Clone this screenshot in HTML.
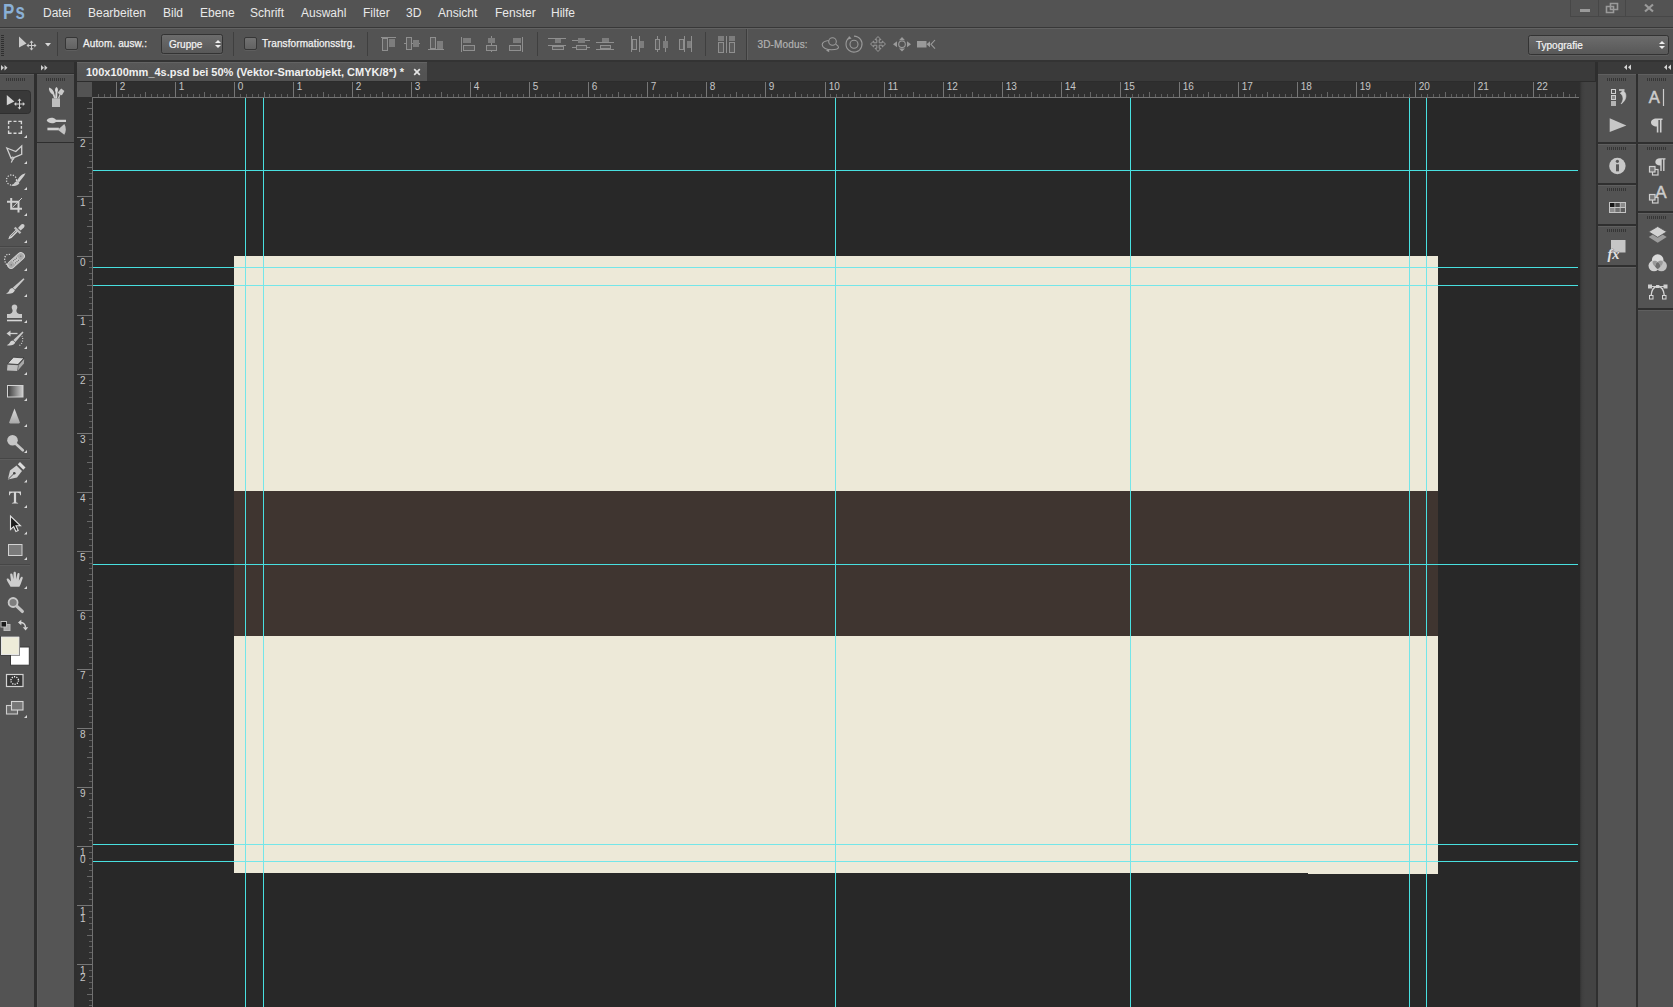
<!DOCTYPE html>
<html><head><meta charset="utf-8"><title>Photoshop</title>
<style>
html,body{margin:0;padding:0}
body{width:1673px;height:1007px;overflow:hidden;background:#535353;font-family:"Liberation Sans",sans-serif;position:relative;color:#e6e6e6}
.abs{position:absolute}
.menu span{position:absolute;top:6px;font-size:12px;color:#e9e9e9;white-space:nowrap}
.sep{position:absolute;width:1px;background:#3f3f3f}
.grip{position:absolute;height:3px;background:repeating-linear-gradient(90deg,#353535 0,#353535 1px,transparent 1px,transparent 2px)}
.tri{position:absolute;width:0;height:0;border-left:3px solid transparent;border-bottom:3px solid #d6d6d6}
.hg{position:absolute;left:93px;width:1485px;height:1px;background:#48e0e0}
.vg{position:absolute;top:98px;height:909px;width:1px;background:#48e0e0}
.pn{position:absolute;background:#535353;box-shadow:inset 0 1px 0 #5f5f5f}

.cb{position:absolute;width:13px;height:13px;box-sizing:border-box;border:1px solid #363636;border-radius:2px;background:linear-gradient(#727272,#626262);box-shadow:0 1px 0 #5e5e5e}
.otxt{position:absolute;font-size:10px;color:#f2f2f2;white-space:nowrap;letter-spacing:0.1px;-webkit-text-stroke:0.25px #f2f2f2}
.dd{position:absolute;box-sizing:border-box;border:1px solid #333;border-radius:2.500px;background:linear-gradient(#6c6c6c,#585858);box-shadow:0 1px 0 #5f5f5f}
.dd span{position:absolute;font-size:10px;color:#f4f4f4;white-space:nowrap;-webkit-text-stroke:0.2px #f4f4f4}
.dd i{position:absolute;top:5px;width:0;height:0;border-left:3px solid transparent;border-right:3px solid transparent;border-bottom:3px solid #eee}
.dd i:after{content:"";position:absolute;left:-3px;top:5px;width:0;height:0;border-left:3px solid transparent;border-right:3px solid transparent;border-top:3px solid #eee}
</style></head><body>

<!-- ===== MENU BAR ===== -->
<div class="abs" style="left:0;top:0;width:1673px;height:27px;background:#535353"></div>
<div class="abs" style="left:3px;top:-1px;font-size:22px;font-weight:bold;color:#8ab0d6;letter-spacing:1.5px;transform:scaleX(0.77);transform-origin:left">Ps</div>
<div class="menu">
<span style="left:43px">Datei</span><span style="left:88px">Bearbeiten</span><span style="left:163px">Bild</span><span style="left:200px">Ebene</span><span style="left:250px">Schrift</span><span style="left:301px">Auswahl</span><span style="left:363px">Filter</span><span style="left:406px">3D</span><span style="left:438px">Ansicht</span><span style="left:495px">Fenster</span><span style="left:551px">Hilfe</span>
</div>
<!-- window controls -->
<div class="abs" style="left:1570px;top:0;width:103px;height:17px;border-left:1px solid #474747;border-bottom:1px solid #474747;box-sizing:border-box"></div>
<div class="sep" style="left:1598px;top:0;height:16px;background:#474747"></div>
<div class="sep" style="left:1625px;top:0;height:16px;background:#474747"></div>
<div class="abs" style="left:1580px;top:9px;width:10px;height:3px;background:#9a9a9a"></div>
<svg class="abs" style="left:1604px;top:1px" width="16" height="14" viewBox="0 0 16 14"><path d="M6.5 2.5h7v6h-7z M2.5 5.5h7v6h-7z" fill="none" stroke="#9a9a9a" stroke-width="1.6"/></svg>
<svg class="abs" style="left:1642px;top:2px" width="14" height="12" viewBox="0 0 14 12"><path d="M3 2.5L11 9.5M11 2.5L3 9.5" fill="none" stroke="#9a9a9a" stroke-width="2.2"/></svg>

<div class="abs" style="left:0;top:27px;width:1673px;height:1px;background:#383838"></div>
<div class="abs" style="left:0;top:28px;width:1673px;height:1px;background:#626262"></div>

<!-- ===== OPTIONS BAR ===== -->

<!-- grip -->
<div class="abs" style="left:1px;top:35px;width:3px;height:21px;background:repeating-linear-gradient(180deg,#2f2f2f 0,#2f2f2f 1px,transparent 1px,transparent 2px)"></div>
<!-- move tool icon -->
<svg class="abs" style="left:18px;top:35px" width="20" height="18" viewBox="0 0 20 18"><path d="M1 1.500V12.500L8.500 8.500Z" fill="#cbcbcb"/><path d="M13.500 7v7M10 10.500h7" stroke="#cbcbcb" stroke-width="1" fill="none"/><path d="M13.500 5.500l2 2.200h-4zM13.500 15.500l2-2.200h-4zM8.500 10.500l2.200-2v4zM18.500 10.500l-2.200-2v4z" fill="#cbcbcb"/></svg>
<svg class="abs" style="left:45px;top:43px" width="6" height="4" viewBox="0 0 6 4"><path d="M0 0h6L3 3.500z" fill="#d8d8d8"/></svg>
<div class="sep" style="left:57px;top:32px;height:24px"></div>
<div class="cb" style="left:65px;top:37px"></div>
<div class="otxt" style="left:83px;top:37.500px">Autom. ausw.:</div>
<div class="dd" style="left:161px;top:34px;width:62px;height:20px"><span style="left:7px;top:3.500px">Gruppe</span><i style="left:53px"></i></div>
<div class="sep" style="left:233px;top:32px;height:24px"></div>
<div class="cb" style="left:244px;top:37px"></div>
<div class="otxt" style="left:262px;top:37.500px">Transformationsstrg.</div>
<div class="sep" style="left:367px;top:32px;height:24px"></div>
<svg class="abs" style="left:370px;top:30px" width="380" height="30" viewBox="370 30 380 30" shape-rendering="crispEdges"><path d="M381 37.5H396" stroke="#8f8f8f" stroke-width="1"/><rect x="382.5" y="38.5" width="5" height="12" fill="#5d5d5d" stroke="#8f8f8f" stroke-width="1"/><rect x="389" y="39" width="6" height="8" fill="#7d7d7d"/><path d="M404 43.5H420" stroke="#8f8f8f" stroke-width="1"/><rect x="406.5" y="37.5" width="5" height="12" fill="#5d5d5d" stroke="#8f8f8f" stroke-width="1"/><rect x="413" y="40" width="6" height="7" fill="#7d7d7d"/><path d="M428 49.5H444" stroke="#8f8f8f" stroke-width="1"/><rect x="430.5" y="37.5" width="5" height="11" fill="#5d5d5d" stroke="#8f8f8f" stroke-width="1"/><rect x="437" y="41" width="6" height="8" fill="#7d7d7d"/><path d="M461.5 37V52" stroke="#8f8f8f" stroke-width="1"/><rect x="463" y="38" width="8" height="5" fill="#7d7d7d"/><rect x="463.5" y="45.5" width="11" height="5" fill="#5d5d5d" stroke="#8f8f8f" stroke-width="1"/><path d="M491.5 36V52" stroke="#8f8f8f" stroke-width="1"/><rect x="488" y="38" width="7" height="5" fill="#7d7d7d"/><rect x="486.5" y="45.5" width="10" height="5" fill="#5d5d5d" stroke="#8f8f8f" stroke-width="1"/><path d="M522.5 37V52" stroke="#8f8f8f" stroke-width="1"/><rect x="513" y="38" width="8" height="5" fill="#7d7d7d"/><rect x="509.5" y="45.5" width="11" height="5" fill="#5d5d5d" stroke="#8f8f8f" stroke-width="1"/><path d="M548 38.5H566" stroke="#8f8f8f" stroke-width="1"/><path d="M548 45.5H566" stroke="#8f8f8f" stroke-width="1"/><rect x="555" y="39" width="6" height="4" fill="#7d7d7d"/><rect x="552.5" y="46.5" width="11" height="3" fill="#5d5d5d" stroke="#8f8f8f" stroke-width="1"/><path d="M572 40.5H590" stroke="#8f8f8f" stroke-width="1"/><path d="M572 47.5H590" stroke="#8f8f8f" stroke-width="1"/><rect x="578" y="38" width="7" height="5" fill="#7d7d7d"/><rect x="576.5" y="45.5" width="10" height="4" fill="#5d5d5d" stroke="#8f8f8f" stroke-width="1"/><path d="M596 42.5H614" stroke="#8f8f8f" stroke-width="1"/><path d="M596 49.5H614" stroke="#8f8f8f" stroke-width="1"/><rect x="602" y="38" width="7" height="4" fill="#7d7d7d"/><rect x="600.5" y="45.5" width="10" height="3" fill="#5d5d5d" stroke="#8f8f8f" stroke-width="1"/><path d="M631.5 36V52" stroke="#8f8f8f" stroke-width="1"/><path d="M639.5 36V52" stroke="#8f8f8f" stroke-width="1"/><rect x="632.5" y="39.5" width="4" height="10" fill="#5d5d5d" stroke="#8f8f8f" stroke-width="1"/><rect x="640" y="41" width="4" height="7" fill="#7d7d7d"/><path d="M657.5 36V52" stroke="#8f8f8f" stroke-width="1"/><path d="M665.5 36V52" stroke="#8f8f8f" stroke-width="1"/><rect x="655.5" y="39.5" width="4" height="10" fill="#5d5d5d" stroke="#8f8f8f" stroke-width="1"/><rect x="663" y="41" width="5" height="7" fill="#7d7d7d"/><path d="M684.5 36V52" stroke="#8f8f8f" stroke-width="1"/><path d="M691.5 36V52" stroke="#8f8f8f" stroke-width="1"/><rect x="679.5" y="39.5" width="4" height="10" fill="#5d5d5d" stroke="#8f8f8f" stroke-width="1"/><rect x="687" y="41" width="4" height="7" fill="#7d7d7d"/><rect x="718" y="36" width="6" height="5" fill="#7d7d7d"/><rect x="718.5" y="42.5" width="5" height="10" fill="#5d5d5d" stroke="#8f8f8f" stroke-width="1"/><path d="M726.5 36V53" stroke="#8f8f8f" stroke-width="1"/><rect x="729" y="36" width="6" height="5" fill="#7d7d7d"/><rect x="729.5" y="42.5" width="5" height="10" fill="#5d5d5d" stroke="#8f8f8f" stroke-width="1"/></svg>
<div class="sep" style="left:537px;top:32px;height:24px"></div>
<div class="sep" style="left:705px;top:32px;height:24px"></div>
<div class="abs" style="left:746px;top:29px;width:1px;height:31px;background:#3d3d3d"></div>
<div class="abs" style="left:747px;top:29px;width:1px;height:31px;background:#606060"></div>
<div class="abs" style="left:757.500px;top:38.500px;font-size:10px;color:#b2b2b2;white-space:nowrap;letter-spacing:0.15px;-webkit-text-stroke:0.2px #b2b2b2">3D-Modus:</div>
<svg class="abs" style="left:815px;top:32px" width="130" height="26" viewBox="815 32 130 26" fill="none" stroke="#9a9a9a" stroke-width="1.100">
<!-- orbit -->
<circle cx="832.500" cy="41.500" r="3.800"/>
<path d="M828.500 40.500c-3.500.5-6.300 2-6.300 4.300 0 3 4.700 5 9.300 5 3.600 0 7-.9 7-2.500 0-1.100-1-2.100-2.800-3"/>
<path d="M826 50.500l3.200-1.800v3.600z" fill="#9a9a9a" stroke="none"/>
<!-- roll -->
<path d="M849.500 37.500a8 8 0 1 0 4.500-1.400"/>
<path d="M848 39.500l1-3.500 2.600 2.600z" fill="#9a9a9a" stroke="none"/>
<circle cx="854" cy="44.300" r="4"/>
<!-- pan -->
<path d="M878 36.500l3 3.200h-1.800v3.100h3.100v-1.800l3.200 3-3.200 3v-1.800h-3.100v3.100h1.800l-3 3.200-3-3.200h1.800v-3.100h-3.100v1.800l-3.200-3 3.200-3v1.800h3.100v-3.100h-1.800z" stroke-width="1"/>
<!-- slide -->
<circle cx="902" cy="44.300" r="3.300"/>
<path d="M902 37l3 3.200h-6zM902 51.600l3-3.200h-6zM893 44.300l4-3v6zM911 44.300l-4-3v6z" fill="#9a9a9a" stroke="none"/>
<!-- camera -->
<rect x="917" y="41" width="9.500" height="6.500" fill="#9a9a9a" stroke="none"/>
<path d="M926.500 44.300l3.500-3v6z" fill="#9a9a9a" stroke="none"/>
<path d="M935 40l-4 4.300 4 4.300"/>
</svg>
<div class="dd" style="left:1528px;top:35px;width:141px;height:20px"><span style="left:7px;top:3.500px">Typografie</span><i style="left:130px"></i></div>

<div class="abs" style="left:0;top:60px;width:1673px;height:2px;background:#333"></div>

<!-- ===== LEFT DOCK ===== -->
<div class="abs" style="left:0;top:62px;width:77px;height:945px;background:#2e2e2e"></div>
<div class="abs" style="left:0;top:62px;width:74.300px;height:11px;background:#3a3a3a"></div>
<div class="pn" style="left:0;top:74px;width:34.400px;height:933px"></div>
<div class="pn" style="left:36.700px;top:74px;width:37.600px;height:68px"></div>
<div class="pn" style="left:36.700px;top:143px;width:37.600px;height:864px;background:#555;box-shadow:inset 1px 0 0 #5b5b5b"></div>

<!-- header arrows -->
<svg class="abs" style="left:0;top:62px" width="76" height="12" viewBox="0 62 76 12"><path d="M1 65l3 2.700-3 2.700zM4.500 65l3 2.700-3 2.700zM41 65l3 2.700-3 2.700zM44.500 65l3 2.700-3 2.700z" fill="#cfcfcf"/></svg>
<div class="grip" style="left:6px;top:78px;width:20px"></div>
<div class="grip" style="left:46px;top:78px;width:20px"></div>
<svg class="abs" style="left:0;top:74px" width="36" height="660" viewBox="0 74 36 660">
<defs>
<linearGradient id="gr1" x1="0" x2="1" y1="0" y2="0"><stop offset="0" stop-color="#3a3a3a"/><stop offset="1" stop-color="#d0d0d0"/></linearGradient>
<linearGradient id="gr2" x1="0" x2="0" y1="0" y2="1"><stop offset="0" stop-color="#dcdcdc"/><stop offset="1" stop-color="#a8a8a8"/></linearGradient>
</defs>
<!-- selected bg -->
<rect x="-3" y="90.500" width="33.500" height="23" rx="3" fill="#393939" stroke="#2f2f2f"/>
<!-- move -->
<path d="M6.800 95V105.200L14.300 101.500Z" fill="#d2d2d2"/>
<path d="M19.500 100v8M15.500 104h8" stroke="#d2d2d2" stroke-width="1" fill="none"/>
<path d="M19.500 98.500l2 2.200h-4zM19.500 109.500l2-2.200h-4zM14 104l2.200-2v4zM25 104l-2.200-2v4z" fill="#d2d2d2"/>
<!-- marquee -->
<path d="M8.600 124.300V121.400H11.600M13.500 121.400H16.500M18.400 121.400H21.400V124.300M21.400 126H21.400V128.800M21.400 130.400V133.300H18.400M16.500 133.300H13.500M11.600 133.300H8.600V130.400M8.600 128.800V126" fill="none" stroke="#d8d8d8" stroke-width="1.400"/>
<!-- poly lasso -->
<path d="M6.800 148L15.800 151.500L21.700 146V154.300L13.200 157.800L11 158Z" fill="none" stroke="#d0d0d0" stroke-width="1.300" stroke-linejoin="miter"/>
<path d="M13.500 157.800L11.300 162.500" stroke="#d0d0d0" stroke-width="1.200" fill="none"/>
<circle cx="12.600" cy="158.300" r="1.400" fill="none" stroke="#d0d0d0" stroke-width="0.800"/>
<!-- quick select -->
<circle cx="11.500" cy="180" r="5" fill="none" stroke="#d6d6d6" stroke-width="1.300" stroke-dasharray="1.200 1.500"/>
<path d="M25.500 173.300c-4 .8-6.500 4-8.500 7.500l2 1.400c2.500-3 5-5.500 6.500-8.900z" fill="#d0d0d0"/>
<path d="M11 185.500c2.500-.3 3.500-3.500 6-4.500 1.500.3 2.300 1.200 2.300 2.600-2 2.400-5 3.200-8.300 1.900z" fill="#c8c8c8"/>
<!-- crop -->
<path d="M7 201.700H18.500V212.500M11.200 198V208.700H22" fill="none" stroke="#d2d2d2" stroke-width="2"/>
<path d="M12.500 207.300L22 198" stroke="#d2d2d2" stroke-width="1" fill="none"/>
<!-- eyedropper -->
<path d="M8.300 239.300l1.200-3.300 7-7 2 2-7 7z" fill="#d6d6d6"/>
<path d="M10.700 236.500l6-6" stroke="#666" stroke-width="0.900"/>
<path d="M15.500 226.700l5.800 5.800-1.600 1.600-5.800-5.800z" fill="#bdbdbd"/>
<path d="M18 228l3.200-3.400c1-.9 2.300-.6 2.800 0 .6.600.8 1.800 0 2.800L20.600 230.600z" fill="#cdcdcd"/>
<!-- heal -->
<g transform="rotate(-42 16 260.500)"><rect x="6" y="257" width="20" height="7" rx="3.500" fill="#a9a9a9" stroke="#d2d2d2" stroke-width="1"/><rect x="12.500" y="257.500" width="7" height="6" fill="#c4c4c4"/><path d="M14 259h0M16 259h0M18 259h0M14 262h0M16 262h0M18 262h0M9.500 260.500h0M22.500 260.500h0" stroke="#5a5a5a" stroke-width="1.100" stroke-linecap="round"/></g>
<path d="M10 254.500c-3-1-5.500 1.500-5.300 5 .2 3 1.800 5.500 3.800 6.500" fill="none" stroke="#dadada" stroke-width="1.300" stroke-dasharray="1.200 1.400"/>
<!-- brush -->
<path d="M23.500 278.300l1 1-9.500 10.500-2.300-2z" fill="#c9c9c9"/>
<path d="M12.500 288l2.400 2.200c-1 3-4.500 4-9 3.300 1.800-.8 2.800-1.600 3.300-3 .5-1.400 1.600-2.300 3.300-2.500z" fill="#d2d2d2"/>
<!-- stamp -->
<path d="M14.500 304.500c1.700 0 2.800 1.200 2.800 2.700 0 1.300-.9 2-.9 3.300 0 1.700.9 3 3 3.500h2.600v4H7v-4h2.600c2.100-.5 3-1.800 3-3.500 0-1.300-.9-2-.9-3.300 0-1.500 1.100-2.700 2.800-2.700z" fill="#c8c8c8"/>
<path d="M7 320.500h15" stroke="#d6d6d6" stroke-width="1.600"/>
<!-- history brush -->
<path d="M22.500 331.500l1 1-8 9.500-2.200-1.900z" fill="#c9c9c9"/>
<path d="M13 340.500l2.300 2c-1 2.500-4.300 3.400-8.500 2.700 1.700-.7 2.600-1.400 3.100-2.600.5-1.300 1.500-2 3.100-2.100z" fill="#d2d2d2"/>
<path d="M8 333.500h9.500" stroke="#d0d0d0" stroke-width="1.300" fill="none"/>
<path d="M6.500 333.500l4-3v6z" fill="#d0d0d0"/>
<path d="M19.500 345.500c3-2 4-6 2.500-9.500" stroke="#d8d8d8" stroke-width="1.200" stroke-dasharray="1 1.500" fill="none"/>
<!-- eraser -->
<path d="M13.500 357.200l10.500 .8-6 6.500-10.500-.8z" fill="#d8d8d8"/>
<path d="M7.500 364.500l10.500.8-.8 5.700-10.200-.5z" fill="#bdbdbd"/>
<path d="M18.700 365.200l5.500-6.200-.3 4.500-6 7z" fill="#a9a9a9"/>
<path d="M13.500 357.200l10.500 .8-6 6.500-10.500-.8z" fill="none" stroke="#2e2e2e" stroke-width="0.700"/>
<!-- gradient -->
<rect x="7.500" y="385.500" width="15.500" height="11.500" fill="url(#gr1)" stroke="#d2d2d2" stroke-width="1"/>
<!-- blur -->
<path d="M14.500 408.500l5.300 13.800c.2.700-.2 1.200-1 1.200h-8.600c-.8 0-1.200-.5-1-1.200z" fill="url(#gr2)"/>
<!-- dodge -->
<circle cx="12.500" cy="440.300" r="5.300" fill="#c6c6c6"/>
<path d="M16 444l6.800 6.300" stroke="#c6c6c6" stroke-width="2.600" stroke-linecap="round"/>
<!-- pen -->
<path d="M7.800 479.600l2.200-9 6.500-5 5.500 5.500-5 6.500z" fill="#cfcfcf"/>
<path d="M8.500 479l5.500-5.500" stroke="#444" stroke-width="0.900"/><circle cx="14.300" cy="473.200" r="1.300" fill="#444"/>
<path d="M17.800 464.200l2.200-2.200 5.500 5.500-2.200 2.200z" fill="#dcdcdc"/>
<!-- type -->
<path d="M9 491.500h12v3.800h-.8c-.2-1.700-.9-2.500-2.600-2.500h-1.500v8.700c0 1 .5 1.300 2 1.400v.7h-6.200v-.7c1.500-.1 2-.4 2-1.400v-8.700h-1.500c-1.700 0-2.400.8-2.600 2.500h-.8z" fill="#d6d6d6"/>
<!-- path select -->
<path d="M10.500 516v13.500l3.200-2.800 2.200 4.800 2.300-1-2.200-4.700h4.500z" fill="#1c1c1c" stroke="#e0e0e0" stroke-width="1.100" stroke-linejoin="miter"/>
<!-- rect shape -->
<rect x="8.500" y="544.500" width="13.500" height="11" fill="#7b7b7b" stroke="#d2d2d2" stroke-width="1"/>
<!-- hand -->
<path transform="translate(1.200 0.300) translate(14 579) scale(1.04 1) translate(-14 -579)" d="M9.500 586.500c-1.200-2.500-3.400-5.600-3.700-7.200-.2-1 1-1.700 2-.7l2.200 2.600-.8-6.700c-.2-1.500 1.800-1.800 2.200-.3l.9 4.800.1-6.300c0-1.600 2.200-1.600 2.300 0l.3 6.200 1.100-5.200c.3-1.500 2.300-1.100 2.100.4l-.7 6.300 1.800-3.300c.7-1.300 2.400-.4 1.900.9-.9 2.400-1.500 5.500-3.200 8.500z" fill="#cdcdcd"/>
<!-- zoom -->
<circle cx="13.100" cy="602.500" r="4.500" fill="#7e7e7e" stroke="#c9c9c9" stroke-width="1.800"/>
<path d="M17 606.400l5.300 5" stroke="#c4c4c4" stroke-width="3.300" stroke-linecap="round"/>
<!-- default colours -->
<rect x="4" y="624.500" width="6" height="6" fill="#a8a8a8" stroke="#b8b8b8" stroke-width="1"/>
<rect x="1" y="621.500" width="5.500" height="5.500" fill="#1a1a1a" stroke="#bdbdbd" stroke-width="1"/>
<!-- swap -->
<path d="M19.500 622.500c3.500-.3 6 1.500 6 5" fill="none" stroke="#d6d6d6" stroke-width="1.400"/>
<path d="M18 622.600l3.300-2.800v5.400zM25.600 630.500l-2.800-3.300h5.400z" fill="#d6d6d6"/>
<!-- bg / fg -->
<rect x="10.500" y="647" width="18.800" height="18.200" fill="#ffffff" stroke="#3a3a3a" stroke-width="1"/>
<rect x="1" y="636.500" width="18.500" height="18.500" fill="#eeecd9" stroke="#333" stroke-width="1"/>
<rect x="1.500" y="637" width="17.500" height="17.500" fill="none" stroke="#e6e6e6" stroke-width="1"/>
<!-- quick mask -->
<rect x="6.500" y="674.500" width="16.500" height="12" fill="#363636" stroke="#d2d2d2" stroke-width="1.200"/>
<circle cx="14.700" cy="680.500" r="3.800" fill="none" stroke="#f0f0f0" stroke-width="1.400" stroke-dasharray="1.200 1.190"/>
<!-- screen mode -->
<rect x="6.500" y="705.500" width="11" height="8.500" fill="#6a6a6a" stroke="#cdcdcd" stroke-width="1.100"/>
<rect x="11.500" y="701.500" width="11.500" height="8.500" fill="#777" stroke="#d6d6d6" stroke-width="1.100"/>
<!-- separators -->
<path d="M0 246.500h30M0 458.500h30M0 564.500h30" stroke="#464646" stroke-width="1"/>
<path d="M0 247.500h30M0 459.500h30M0 565.500h30" stroke="#5c5c5c" stroke-width="1"/>
<!-- corner triangles -->
<g fill="#d8d8d8"><path d="M27 135v3h-3z"/><path d="M27 161v3h-3z"/><path d="M27 187v3h-3z"/><path d="M27 213v3h-3z"/><path d="M27 240v3h-3z"/><path d="M27 268v3h-3z"/><path d="M27 294v3h-3z"/><path d="M27 320v3h-3z"/><path d="M27 346v3h-3z"/><path d="M27 372v3h-3z"/><path d="M27 398v3h-3z"/><path d="M27 424v3h-3z"/><path d="M27 450v3h-3z"/><path d="M27 479.5v3h-3z"/><path d="M27 505v3h-3z"/><path d="M27 531.5v3h-3z"/><path d="M27 557v3h-3z"/><path d="M27 586v3h-3z"/><path d="M27 715v3h-3z"/></g>
</svg>
<!-- mini panel icons -->
<svg class="abs" style="left:37px;top:74px" width="38" height="70" viewBox="37 74 38 70">
<!-- brush presets -->
<path d="M52 98.300h8v8.700h-8z" fill="#bdbdbd"/>
<path d="M54 98.300l-1.300-3.800c-2.500-1.500-4.300-4.200-3.700-7 3 1 5 3.500 5.300 6.300l1.500 4.500z" fill="#cfcfcf"/>
<path d="M55.300 98.300l.3-6c-.9-1.700-.8-4 .9-5.200 1.700 1.200 1.800 3.500.9 5.200l-.2 6z" fill="#d8d8d8"/>
<path d="M57.800 98.300l1.700-4-2-1.600 3.700-4.200 3.200 2.500-2.500 4.200-1.500-.5-1 3.600z" fill="#c8c8c8"/>
<!-- brush -->
<path d="M46.700 120.500c1.200-3 6.500-3.700 9.300-.8h10v2.200h-10c-2.500 2.200-7.500 1.800-9.300-1.400z" fill="#cfcfcf"/>
<path d="M47.400 127.700h11.500v2.600h-11.500z" fill="#cfcfcf"/>
<path d="M58.700 129l5.600-5c2 3.200 2 7.600 0 10.800l-5.600-4.300z" fill="#c2c2c2"/>
</svg>


<!-- ===== DOCUMENT WINDOW ===== -->
<div class="abs" style="left:77px;top:62px;width:1518px;height:20px;background:#3a3a3a"></div>
<div class="abs" style="left:77px;top:62px;width:350px;height:19px;background:linear-gradient(#585858,#535353 60%);box-shadow:inset 0 1px 0 #636363"></div>
<div class="abs" style="left:86px;top:66px;font-size:11px;color:#f0f0f0;white-space:nowrap;font-weight:bold">100x100mm_4s.psd bei 50% (Vektor-Smartobjekt, CMYK/8*) *</div>
<svg class="abs" style="left:413px;top:67.500px" width="8" height="8" viewBox="0 0 8 8"><path d="M1.200 1.200L6.800 6.800M6.800 1.200L1.200 6.800" stroke="#e4e4e4" stroke-width="1.700" fill="none"/></svg>

<!-- rulers -->
<div class="abs" style="left:77px;top:81px;width:1518px;height:1px;background:#2c2c2c"></div>
<div class="abs" style="left:77px;top:82px;width:1503px;height:16px;background:#2f2f2f"></div>
<div class="abs" style="left:77px;top:98px;width:16px;height:909px;background:#2f2f2f"></div>
<div class="abs" style="left:77px;top:82px;width:15px;height:15px;background:#535353"></div>
<div class="abs" style="left:1579px;top:82px;width:17px;height:925px;background:linear-gradient(90deg,#2c2c2c 0,#3f3f3f 3px,#434343 6px,#434343 100%)"></div>
<!-- canvas -->
<div class="abs" style="left:93px;top:98px;width:1487px;height:909px;background:#282828"></div>
<svg class="abs" style="left:93px;top:82px" width="1486" height="16" viewBox="0 0 1486 16" shape-rendering="crispEdges">
<path d="M5.5 12V16M11.5 12V16M17.5 12V16M29.5 12V16M35.5 12V16M41.5 12V16M47.5 12V16M58.5 12V16M64.5 12V16M70.5 12V16M76.5 12V16M88.5 12V16M94.5 12V16M100.5 12V16M106.5 12V16M117.5 12V16M123.5 12V16M129.5 12V16M135.5 12V16M147.5 12V16M153.5 12V16M159.5 12V16M165.5 12V16M176.5 12V16M182.5 12V16M188.5 12V16M194.5 12V16M206.5 12V16M212.5 12V16M218.5 12V16M224.5 12V16M235.5 12V16M241.5 12V16M247.5 12V16M253.5 12V16M265.5 12V16M271.5 12V16M277.5 12V16M283.5 12V16M295.5 12V16M300.5 12V16M306.5 12V16M312.5 12V16M324.5 12V16M330.5 12V16M336.5 12V16M342.5 12V16M354.5 12V16M360.5 12V16M365.5 12V16M371.5 12V16M383.5 12V16M389.5 12V16M395.5 12V16M401.5 12V16M413.5 12V16M419.5 12V16M424.5 12V16M430.5 12V16M442.5 12V16M448.5 12V16M454.5 12V16M460.5 12V16M472.5 12V16M478.5 12V16M484.5 12V16M489.5 12V16M501.5 12V16M507.5 12V16M513.5 12V16M519.5 12V16M531.5 12V16M537.5 12V16M543.5 12V16M548.5 12V16M560.5 12V16M566.5 12V16M572.5 12V16M578.5 12V16M590.5 12V16M596.5 12V16M602.5 12V16M608.5 12V16M619.5 12V16M625.5 12V16M631.5 12V16M637.5 12V16M649.5 12V16M655.5 12V16M661.5 12V16M667.5 12V16M678.5 12V16M684.5 12V16M690.5 12V16M696.5 12V16M708.5 12V16M714.5 12V16M720.5 12V16M726.5 12V16M737.5 12V16M743.5 12V16M749.5 12V16M755.5 12V16M767.5 12V16M773.5 12V16M779.5 12V16M785.5 12V16M797.5 12V16M802.5 12V16M808.5 12V16M814.5 12V16M826.5 12V16M832.5 12V16M838.5 12V16M844.5 12V16M856.5 12V16M861.5 12V16M867.5 12V16M873.5 12V16M885.5 12V16M891.5 12V16M897.5 12V16M903.5 12V16M915.5 12V16M921.5 12V16M926.5 12V16M932.5 12V16M944.5 12V16M950.5 12V16M956.5 12V16M962.5 12V16M974.5 12V16M980.5 12V16M985.5 12V16M991.5 12V16M1003.5 12V16M1009.5 12V16M1015.5 12V16M1021.5 12V16M1033.5 12V16M1039.5 12V16M1045.5 12V16M1050.5 12V16M1062.5 12V16M1068.5 12V16M1074.5 12V16M1080.5 12V16M1092.5 12V16M1098.5 12V16M1104.5 12V16M1110.5 12V16M1121.5 12V16M1127.5 12V16M1133.5 12V16M1139.5 12V16M1151.5 12V16M1157.5 12V16M1163.5 12V16M1169.5 12V16M1180.5 12V16M1186.5 12V16M1192.5 12V16M1198.5 12V16M1210.5 12V16M1216.5 12V16M1222.5 12V16M1228.5 12V16M1239.5 12V16M1245.5 12V16M1251.5 12V16M1257.5 12V16M1269.5 12V16M1275.5 12V16M1281.5 12V16M1287.5 12V16M1298.5 12V16M1304.5 12V16M1310.5 12V16M1316.5 12V16M1328.5 12V16M1334.5 12V16M1340.5 12V16M1346.5 12V16M1358.5 12V16M1363.5 12V16M1369.5 12V16M1375.5 12V16M1387.5 12V16M1393.5 12V16M1399.5 12V16M1405.5 12V16M1417.5 12V16M1422.5 12V16M1428.5 12V16M1434.5 12V16M1446.5 12V16M1452.5 12V16M1458.5 12V16M1464.5 12V16M1476.5 12V16M1482.5 12V16" stroke="#5e5e5e" stroke-width="1" fill="none"/>
<path d="M52.5 10V16M111.5 10V16M171.5 10V16M230.5 10V16M289.5 10V16M348.5 10V16M407.5 10V16M466.5 10V16M525.5 10V16M584.5 10V16M643.5 10V16M702.5 10V16M761.5 10V16M820.5 10V16M879.5 10V16M938.5 10V16M997.5 10V16M1056.5 10V16M1115.5 10V16M1174.5 10V16M1234.5 10V16M1293.5 10V16M1352.5 10V16M1411.5 10V16M1470.5 10V16" stroke="#686868" stroke-width="1" fill="none"/>
<path d="M23.5 0V16M82.5 0V16M141.5 0V16M200.5 0V16M259.5 0V16M318.5 0V16M377.5 0V16M436.5 0V16M495.5 0V16M554.5 0V16M613.5 0V16M672.5 0V16M732.5 0V16M791.5 0V16M850.5 0V16M909.5 0V16M968.5 0V16M1027.5 0V16M1086.5 0V16M1145.5 0V16M1204.5 0V16M1263.5 0V16M1322.5 0V16M1381.5 0V16M1440.5 0V16" stroke="#767676" stroke-width="1" fill="none"/>
<g font-family="Liberation Sans, sans-serif" font-size="10" fill="#c6c6c6" shape-rendering="auto">
<text x="26.8" y="7.6">2</text>
<text x="85.8" y="7.6">1</text>
<text x="144.8" y="7.6">0</text>
<text x="203.8" y="7.6">1</text>
<text x="262.8" y="7.6">2</text>
<text x="321.8" y="7.6">3</text>
<text x="380.8" y="7.6">4</text>
<text x="439.8" y="7.6">5</text>
<text x="498.8" y="7.6">6</text>
<text x="557.8" y="7.6">7</text>
<text x="616.8" y="7.6">8</text>
<text x="675.8" y="7.6">9</text>
<text x="735.8" y="7.6">10</text>
<text x="794.8" y="7.6">11</text>
<text x="853.8" y="7.6">12</text>
<text x="912.8" y="7.6">13</text>
<text x="971.8" y="7.6">14</text>
<text x="1030.8" y="7.6">15</text>
<text x="1089.8" y="7.6">16</text>
<text x="1148.8" y="7.6">17</text>
<text x="1207.8" y="7.6">18</text>
<text x="1266.8" y="7.6">19</text>
<text x="1325.8" y="7.6">20</text>
<text x="1384.8" y="7.6">21</text>
<text x="1443.8" y="7.6">22</text>
</g></svg>
<svg class="abs" style="left:77px;top:98px" width="16" height="909" viewBox="0 0 16 909" shape-rendering="crispEdges">
<path d="M12 4.5H16M12 16.5H16M12 22.5H16M12 28.5H16M12 33.5H16M12 45.5H16M12 51.5H16M12 57.5H16M12 63.5H16M12 75.5H16M12 81.5H16M12 87.5H16M12 93.5H16M12 104.5H16M12 110.5H16M12 116.5H16M12 122.5H16M12 134.5H16M12 140.5H16M12 146.5H16M12 152.5H16M12 163.5H16M12 169.5H16M12 175.5H16M12 181.5H16M12 193.5H16M12 199.5H16M12 205.5H16M12 211.5H16M12 222.5H16M12 228.5H16M12 234.5H16M12 240.5H16M12 252.5H16M12 258.5H16M12 264.5H16M12 270.5H16M12 282.5H16M12 287.5H16M12 293.5H16M12 299.5H16M12 311.5H16M12 317.5H16M12 323.5H16M12 329.5H16M12 341.5H16M12 346.5H16M12 352.5H16M12 358.5H16M12 370.5H16M12 376.5H16M12 382.5H16M12 388.5H16M12 400.5H16M12 406.5H16M12 411.5H16M12 417.5H16M12 429.5H16M12 435.5H16M12 441.5H16M12 447.5H16M12 459.5H16M12 465.5H16M12 470.5H16M12 476.5H16M12 488.5H16M12 494.5H16M12 500.5H16M12 506.5H16M12 518.5H16M12 524.5H16M12 530.5H16M12 535.5H16M12 547.5H16M12 553.5H16M12 559.5H16M12 565.5H16M12 577.5H16M12 583.5H16M12 589.5H16M12 595.5H16M12 606.5H16M12 612.5H16M12 618.5H16M12 624.5H16M12 636.5H16M12 642.5H16M12 648.5H16M12 654.5H16M12 665.5H16M12 671.5H16M12 677.5H16M12 683.5H16M12 695.5H16M12 701.5H16M12 707.5H16M12 713.5H16M12 724.5H16M12 730.5H16M12 736.5H16M12 742.5H16M12 754.5H16M12 760.5H16M12 766.5H16M12 772.5H16M12 783.5H16M12 789.5H16M12 795.5H16M12 801.5H16M12 813.5H16M12 819.5H16M12 825.5H16M12 831.5H16M12 843.5H16M12 848.5H16M12 854.5H16M12 860.5H16M12 872.5H16M12 878.5H16M12 884.5H16M12 890.5H16M12 902.5H16M12 907.5H16" stroke="#5e5e5e" stroke-width="1" fill="none"/>
<path d="M10 10.5H16M10 69.5H16M10 128.5H16M10 187.5H16M10 246.5H16M10 305.5H16M10 364.5H16M10 423.5H16M10 482.5H16M10 541.5H16M10 600.5H16M10 659.5H16M10 719.5H16M10 778.5H16M10 837.5H16M10 896.5H16" stroke="#686868" stroke-width="1" fill="none"/>
<path d="M0 39.5H16M0 98.5H16M0 158.5H16M0 217.5H16M0 276.5H16M0 335.5H16M0 394.5H16M0 453.5H16M0 512.5H16M0 571.5H16M0 630.5H16M0 689.5H16M0 748.5H16M0 807.5H16M0 866.5H16" stroke="#767676" stroke-width="1" fill="none"/>
<g font-family="Liberation Sans, sans-serif" font-size="10" fill="#c6c6c6" shape-rendering="auto">
<text x="3" y="49.1">2</text>
<text x="3" y="108.1">1</text>
<text x="3" y="168.1">0</text>
<text x="3" y="227.1">1</text>
<text x="3" y="286.1">2</text>
<text x="3" y="345.1">3</text>
<text x="3" y="404.1">4</text>
<text x="3" y="463.1">5</text>
<text x="3" y="522.1">6</text>
<text x="3" y="581.1">7</text>
<text x="3" y="640.1">8</text>
<text x="3" y="699.1">9</text>
<text x="3" y="758.1">1</text>
<text x="3" y="764.8">0</text>
<text x="3" y="817.1">1</text>
<text x="3" y="823.8">1</text>
<text x="3" y="876.1">1</text>
<text x="3" y="882.8">2</text>
</g></svg>
<div class="abs" style="left:92px;top:97px;width:1487px;height:1px;background:#747474"></div>
<div class="abs" style="left:92px;top:97px;width:1px;height:910px;background:#707070"></div>

<!-- document -->
<div class="abs" style="left:234px;top:256px;width:1204px;height:617px;background:#ede9d8"></div>
<div class="abs" style="left:1308px;top:873px;width:130px;height:1px;background:#ede9d8"></div>
<div class="abs" style="left:234px;top:491px;width:1204px;height:145px;background:#3f3530"></div>

<!-- guides -->
<div class="hg" style="top:170px"></div>
<div class="hg" style="top:267px"></div>
<div class="hg" style="top:285px"></div>
<div class="hg" style="top:564px"></div>
<div class="hg" style="top:844px"></div>
<div class="hg" style="top:861px"></div>
<div class="vg" style="left:245px"></div>
<div class="vg" style="left:263px"></div>
<div class="vg" style="left:835px"></div>
<div class="vg" style="left:1130px"></div>
<div class="vg" style="left:1409px"></div>
<div class="vg" style="left:1426px"></div>

<!-- guide overlays on cream -->
<div class="abs" style="left:234px;top:256px;width:1204px;height:235px;overflow:hidden"><div class="abs" style="left:11px;top:0;width:1px;height:235px;background:#74e6e9"></div><div class="abs" style="left:29px;top:0;width:1px;height:235px;background:#74e6e9"></div><div class="abs" style="left:601px;top:0;width:1px;height:235px;background:#74e6e9"></div><div class="abs" style="left:896px;top:0;width:1px;height:235px;background:#74e6e9"></div><div class="abs" style="left:1175px;top:0;width:1px;height:235px;background:#74e6e9"></div><div class="abs" style="left:1192px;top:0;width:1px;height:235px;background:#74e6e9"></div><div class="abs" style="left:0;top:11px;width:1204px;height:1px;background:#74e6e9"></div><div class="abs" style="left:0;top:29px;width:1204px;height:1px;background:#74e6e9"></div></div>
<div class="abs" style="left:234px;top:636px;width:1204px;height:237px;overflow:hidden"><div class="abs" style="left:11px;top:0;width:1px;height:237px;background:#74e6e9"></div><div class="abs" style="left:29px;top:0;width:1px;height:237px;background:#74e6e9"></div><div class="abs" style="left:601px;top:0;width:1px;height:237px;background:#74e6e9"></div><div class="abs" style="left:896px;top:0;width:1px;height:237px;background:#74e6e9"></div><div class="abs" style="left:1175px;top:0;width:1px;height:237px;background:#74e6e9"></div><div class="abs" style="left:1192px;top:0;width:1px;height:237px;background:#74e6e9"></div><div class="abs" style="left:0;top:208px;width:1204px;height:1px;background:#74e6e9"></div><div class="abs" style="left:0;top:225px;width:1204px;height:1px;background:#74e6e9"></div></div>
<div class="abs" style="left:1308px;top:873px;width:130px;height:1px;overflow:hidden"><div class="abs" style="left:101px;top:0;width:1px;height:1px;background:#74e6e9"></div><div class="abs" style="left:118px;top:0;width:1px;height:1px;background:#74e6e9"></div></div>
<!-- ===== RIGHT DOCK ===== -->
<div class="abs" style="left:1595px;top:62px;width:78px;height:20px;background:#2e2e2e"></div><div class="abs" style="left:1596px;top:82px;width:77px;height:925px;background:#2f2f2f"></div>
<div class="abs" style="left:1598px;top:62px;width:75px;height:12px;background:#3a3a3a"></div>

<svg class="abs" style="left:1598px;top:62px" width="75" height="12" viewBox="1598 62 75 12"><path d="M1627 64.500l-3 2.800 3 2.800zM1631 64.500l-3 2.800 3 2.800zM1667 64.500l-3 2.800 3 2.800zM1671 64.500l-3 2.800 3 2.800z" fill="#d4d4d4"/></svg>
<!-- col1 -->
<div class="pn" style="left:1598px;top:74px;width:37.600px;height:68px"></div>
<div class="pn" style="left:1598px;top:143.500px;width:37.600px;height:39.500px"></div>
<div class="pn" style="left:1598px;top:184.500px;width:37.600px;height:39.500px"></div>
<div class="pn" style="left:1598px;top:225.500px;width:37.600px;height:39.500px"></div>
<div class="pn" style="left:1598px;top:266.500px;width:37.600px;height:741px"></div>
<!-- col2 -->
<div class="pn" style="left:1637.600px;top:74px;width:35.400px;height:68px"></div>
<div class="pn" style="left:1637.600px;top:143.500px;width:35.400px;height:67.500px"></div>
<div class="pn" style="left:1637.600px;top:212.500px;width:35.400px;height:95.500px"></div>
<div class="pn" style="left:1637.600px;top:309.500px;width:35.400px;height:698px"></div>
<div class="grip" style="left:1607px;top:78px;width:19px"></div>
<div class="grip" style="left:1607px;top:147px;width:19px"></div>
<div class="grip" style="left:1607px;top:188px;width:19px"></div>
<div class="grip" style="left:1607px;top:229px;width:19px"></div>
<div class="grip" style="left:1647px;top:78px;width:19px"></div>
<div class="grip" style="left:1647px;top:147px;width:19px"></div>
<div class="grip" style="left:1647px;top:216px;width:19px"></div>
<svg class="abs" style="left:1598px;top:74px" width="75" height="240" viewBox="1598 74 75 240">
<!-- history -->
<rect x="1611.500" y="89.500" width="4" height="4" fill="none" stroke="#cfcfcf" stroke-width="1"/>
<rect x="1611.500" y="95.500" width="4" height="4" fill="#8a8a8a" stroke="#cfcfcf" stroke-width="1"/>
<rect x="1611" y="101" width="5" height="5" fill="#b4b4b4"/>
<path d="M1619 90h5.500" stroke="#cfcfcf" stroke-width="1.600" fill="none"/><path d="M1623 90.500c4.200 2.600 4.200 9.500-2 13.500 2.800-4 2.800-8-.8-10.800z" fill="#cfcfcf" stroke="#cfcfcf" stroke-width="0.600"/>
<!-- actions -->
<path d="M1609.700 118.300v13.700l16.700-6.500z" fill="#c6c6c6"/>
<!-- info -->
<circle cx="1617.400" cy="166" r="8.200" fill="#c8c8c8"/>
<circle cx="1617.400" cy="161.300" r="1.600" fill="#5a5a5a"/><rect x="1616" y="164.300" width="3" height="7" fill="#5a5a5a"/>
<!-- swatches -->
<rect x="1609" y="202" width="17" height="11" fill="#c4c4c4"/>
<rect x="1610" y="203" width="4.500" height="4" fill="#151515"/><rect x="1615.300" y="203" width="4.500" height="4" fill="#484848"/><rect x="1620.600" y="203" width="4.400" height="4" fill="#8a8a8a"/>
<rect x="1610" y="208" width="4.500" height="4" fill="#8c8c8c"/><rect x="1615.300" y="208" width="4.500" height="4" fill="#707070"/><rect x="1620.600" y="208" width="4.400" height="4" fill="#5c5c5c"/>
<!-- styles -->
<rect x="1611" y="240" width="14.500" height="12.500" fill="#c6c6c6"/>
<text x="1607.500" y="258.500" font-family="Liberation Serif, serif" font-style="italic" font-weight="bold" font-size="14.500" fill="#e2e2e2" stroke="#535353" stroke-width="0.500" paint-order="stroke">fx</text>
<!-- character A| -->
<text x="1648.800" y="103" font-family="Liberation Sans, sans-serif" font-size="16.500" fill="#cdcdcd" stroke="#cdcdcd" stroke-width="0.500">A</text>
<path d="M1663.500 89v17" stroke="#cdcdcd" stroke-width="1.200"/>
<!-- paragraph -->
<path d="M1656.500 118.500h6v1.400h-1v12.600h-1.600v-12.600h-1.500v12.600h-1.600v-6c-3.500 0-5.800-1.800-5.800-4s2.200-4 5.500-4z" fill="#cfcfcf"/>
<!-- paragraph styles -->
<path d="M1660 158.300h5.500v1.200h-1v11.500h-1.400v-11.500h-1.400v11.500h-1.400v-5.500c-3 0-5-1.500-5-3.600s2-3.600 4.700-3.600z" fill="#cfcfcf"/>
<rect x="1652.500" y="169.500" width="5.500" height="5.500" fill="#535353" stroke="#cfcfcf" stroke-width="1.200"/>
<rect x="1649.500" y="166.500" width="5.500" height="5.500" fill="#777" stroke="#cfcfcf" stroke-width="1.200"/>
<!-- char styles -->
<text x="1655.300" y="198" font-family="Liberation Sans, sans-serif" font-size="17" fill="#cdcdcd" stroke="#cdcdcd" stroke-width="0.500">A</text>
<rect x="1652.500" y="197.500" width="5.500" height="5.500" fill="#535353" stroke="#cfcfcf" stroke-width="1.200"/>
<rect x="1649.500" y="194.500" width="5.500" height="5.500" fill="#777" stroke="#cfcfcf" stroke-width="1.200"/>
<!-- layers -->
<path d="M1657.700 231.500l9 5.500-9 5.700-9-5.700z" fill="#9d9d9d"/>
<path d="M1657.700 226.500l9 5.300-9 5.500-9-5.500z" fill="#d2d2d2" stroke="#535353" stroke-width="0.800"/>
<!-- channels -->
<circle cx="1657.700" cy="260" r="5.800" fill="#dadada"/>
<circle cx="1654" cy="265.800" r="5.500" fill="#d0d0d0"/>
<circle cx="1661.400" cy="265.800" r="5.500" fill="#c0c0c0"/>
<path d="M1657.700 262c1.800 1 2.600 2.600 2.600 4.500-1 1.400-2 2.300-2.600 2.600-.6-.3-1.600-1.200-2.600-2.600 0-1.900.8-3.500 2.600-4.500z" fill="#6e6e6e"/>
<path d="M1652.500 261.500c1.500-1 3.500-1 5.200.5-1.800 1-2.600 2.600-2.600 4.500-1.800-1.300-2.700-3-2.600-5zM1662.900 261.500c-1.500-1-3.500-1-5.200.5 1.800 1 2.600 2.600 2.600 4.500 1.800-1.300 2.700-3 2.600-5z" fill="#999"/>
<!-- paths -->
<path d="M1650 286.500h15.500" stroke="#cfcfcf" stroke-width="1"/>
<rect x="1648" y="284.500" width="4" height="4" fill="#cfcfcf"/><rect x="1663.500" y="284.500" width="4" height="4" fill="#cfcfcf"/><rect x="1656" y="285" width="3.400" height="3" fill="#cfcfcf"/>
<path d="M1651 296c.5-6 3-9.500 6.700-9.500s6.200 3.500 6.700 9.500" fill="none" stroke="#d6d6d6" stroke-width="1.300"/>
<rect x="1649.500" y="295.500" width="3.500" height="3.500" fill="#535353" stroke="#d6d6d6" stroke-width="1"/><rect x="1662.500" y="295.500" width="3.500" height="3.500" fill="#535353" stroke="#d6d6d6" stroke-width="1"/>
</svg>


</body></html>
